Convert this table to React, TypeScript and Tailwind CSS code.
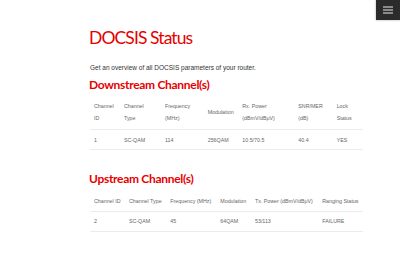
const downCols = [
  ["Channel", "ID"],
  ["Channel", "Type"],
  ["Frequency", "(MHz)"],
  ["Modulation", ""],
  ["Rx. Power", "(dBmV/dBμV)"],
  ["SNR/MER", "(dB)"],
  ["Lock", "Status"],
]
const downRow = ["1", "SC-QAM", "114", "256QAM", "10.5/70.5", "40.4", "YES"]

const upCols = ["Channel ID", "Channel Type", "Frequency (MHz)", "Modulation", "Tx. Power (dBmV/dBμV)", "Ranging Status"]
const upRow = ["2", "SC-QAM", "45", "64QAM", "53/113", "FAILURE"]

function Heading({ children }: { children: React.ReactNode }) {
  return (
    <h2 className="-ml-[1px] font-['Lato',sans-serif] font-bold text-[12px] leading-[14px] tracking-[-0.3px] text-[#e60000]">
      {children}
    </h2>
  )
}

export default function App() {
  return (
    <div className="relative w-[400px] h-[266px] bg-white overflow-hidden font-['Liberation_Sans',Arial,sans-serif]">
      {/* menu button */}
      <button className="absolute right-0 top-0 w-[24px] h-[20px] bg-[#2b2b2b] shadow-[0_0_2px_rgba(0,0,0,0.35)] flex flex-col items-center justify-center gap-[1px]">
        <span className="block w-[10px] h-[2px] bg-[#8a8a8a]" />
        <span className="block w-[10px] h-[2px] bg-[#8a8a8a]" />
        <span className="block w-[10px] h-[2px] bg-[#8a8a8a]" />
      </button>

      <main className="ml-[90px] w-[273px] pt-[27px] text-[#666]">
        <h1 className="-ml-[1px] font-['Lato',sans-serif] font-normal text-[17.5px] leading-[22px] tracking-[-0.9px] text-[#e60000]">
          DOCSIS Status
        </h1>
        <p className="mt-[14px] text-[6.5px] leading-[10px] text-[#333]">
          Get an overview of all DOCSIS parameters of your router.
        </p>

        {/* Downstream */}
        <section className="mt-[5px]">
          <Heading>Downstream Channel(s)</Heading>
          <div className="mt-[4px] text-[5.3px] leading-[12.3px]">
            <div className="grid grid-cols-[30px_41px_42.7px_34.6px_56px_38.4px_1fr] items-center border-b border-[#ececec] pt-[4px] pb-[4px]">
              {downCols.map(([a, b]) => (
                <div key={a + b} className="px-[4px] whitespace-nowrap">
                  {a}
                  {b && <br />}
                  {b}
                </div>
              ))}
            </div>
            <div className="grid grid-cols-[30px_41px_42.7px_34.6px_56px_38.4px_1fr] border-b border-[#ececec] pt-[4px] pb-[3px]">
              {downRow.map((v, i) => (
                <div key={i} className="px-[4px] whitespace-nowrap">
                  {v}
                </div>
              ))}
            </div>
          </div>
        </section>

        {/* Upstream */}
        <section className="mt-[22px]">
          <Heading>Upstream Channel(s)</Heading>
          <div className="mt-[5px] text-[5.3px] leading-[12.3px]">
            <div className="grid grid-cols-[35px_41.3px_50px_34.7px_67.3px_1fr] border-b border-[#ececec] pt-[4px] pb-[3.5px]">
              {upCols.map((c) => (
                <div key={c} className="px-[4px] whitespace-nowrap">
                  {c}
                </div>
              ))}
            </div>
            <div className="grid grid-cols-[35px_41.3px_50px_34.7px_67.3px_1fr] border-b border-[#ececec] pt-[3.5px] pb-[4px]">
              {upRow.map((v, i) => (
                <div key={i} className="px-[4px] whitespace-nowrap">
                  {v}
                </div>
              ))}
            </div>
          </div>
        </section>
      </main>
    </div>
  )
}
